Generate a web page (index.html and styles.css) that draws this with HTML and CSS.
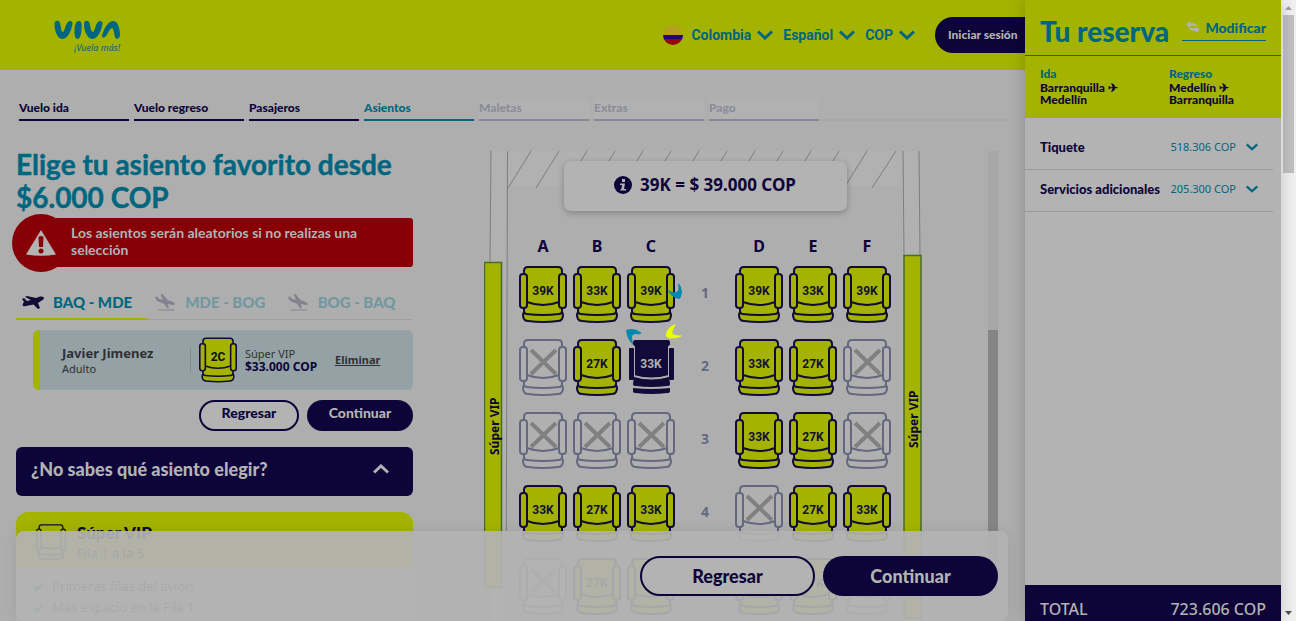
FILE: index.html
```html
<!DOCTYPE html>
<html lang="es">
<head>
<meta charset="utf-8">
<title>Viva - Elige tu asiento</title>
<link rel="stylesheet" href="styles.css">
</head>
<body>
<svg class="defs" aria-hidden="true">
  <symbol id="seat" viewBox="0 0 48 57">
    <path class="seat-fill" d="M5 48Q3 55 7 55Q24 58 41 55Q45 55 43 48V5Q43 1 39 1H9Q5 1 5 5Z"/>
    <path class="seat-line" d="M5 8V5Q5 1 9 1H39Q43 1 43 5V8M8 36Q24 42 40 36M5 41V45Q5 48 8 48Q24 50 40 48Q43 48 43 45V41M5 46Q3 49 5 53Q6 55 9 55Q24 57 39 55Q42 55 43 53Q45 49 43 46"/>
    <rect class="seat-arm" x="1" y="8" width="7" height="34" rx="3"/>
    <rect class="seat-arm" x="40" y="8" width="7" height="34" rx="3"/>
  </symbol>
  <symbol id="seat-picked" viewBox="0 0 48 57">
    <path class="seat-solid" d="M8 1H41Q43 1 43 4V6H42V36Q24 41 7 36V6H6V4Q6 1 8 1ZM7 38Q24 43 42 38V40Q43 42 43 45Q43 47 40 47Q24 49 9 47Q6 47 6 45ZM6 49Q24 51 43 49V52Q43 54 40 54Q24 56 9 54Q6 54 6 52Z"/>
    <rect class="seat-solid" x="2" y="9" width="5" height="32" rx="1"/>
    <rect class="seat-solid" x="42" y="9" width="5" height="32" rx="1"/>
    <path class="seat-gap" d="M7.500 7V37Q24 42 41.500 37V7M7 48Q24 50 42 48"/>
  </symbol>
  <symbol id="seat-taken" viewBox="0 0 48 57">
    <use href="#seat"/>
    <path class="seat-cross" d="M12 11L37 35M37 11L12 35"/>
  </symbol>
  <symbol id="chevron" viewBox="0 0 16 10"><path class="chevron-line" d="M1 1.500L8 8L15 1.500"/></symbol>
  <symbol id="plane-land" viewBox="0 0 20 18">
    <path d="M0 4L2 3.500L4.500 6L8 6.800L5.500 1.500L7.500 1L13 7.500Q19 8.500 20 11Q20 12 18 12L12.500 11L14 15L12.500 15.500L8.500 10.500L3 8.500Q1 7.500 0 4Z"/>
    <rect x="3" y="16.500" width="16" height="1"/>
  </symbol>
  <symbol id="check" viewBox="0 0 10 8"><path class="check-line" d="M1 4L4 7L9.500 1"/></symbol>
</svg>

<div class="window">
  <div class="main">
    <header class="topbar">
      <a class="logo" href="#" aria-label="Viva">
        <svg class="logo-mark" viewBox="0 0 66 20" aria-hidden="true">
          <path d="M0.500 4C0.500 0 5 0 6 3C7 7 7 12 9 12C11 11 11 5 14 2C16 0 19 1 18.500 4C17.500 10 14 19 8.500 19C3 19 0.500 10 0.500 4ZM20.500 11C20.500 5 22 1 25 1C27.500 1 28 4 27.500 9C27.500 14 26 19 23.500 19C21 19 20.500 15 20.500 11ZM30 4C30 0 34.500 0 35.500 3C36.500 7 37 12 39 12C41 11 41 5 44 2C46 0 49 1 48.500 4C47.500 10 44 19 38.500 19C33 19 30 10 30 4ZM48 16C49 10 54 1 59 1C64 1 66 9 66 15C66 19 62 20 61 17C60 13 59.500 8 58 8C55 9 54 14 52 16C50 18 48 18 48 16Z"/>
        </svg>
        <span class="logo-tag">¡Vuela más!</span>
      </a>
      <nav class="prefs">
        <button class="pref"><span class="flag"></span>Colombia <svg class="chev-lg"><use href="#chevron"/></svg></button>
        <button class="pref">Español <svg class="chev-lg"><use href="#chevron"/></svg></button>
        <button class="pref">COP <svg class="chev-lg"><use href="#chevron"/></svg></button>
        <button class="login">Iniciar sesión</button>
      </nav>
    </header>

    <nav class="steps">
      <a class="step done" href="#">Vuelo ida</a>
      <a class="step done" href="#">Vuelo regreso</a>
      <a class="step done" href="#">Pasajeros</a>
      <a class="step current" href="#">Asientos</a>
      <a class="step" href="#">Maletas</a>
      <a class="step" href="#">Extras</a>
      <a class="step" href="#">Pago</a>
    </nav>

    <div class="content">
      <section class="picker">
        <h1 class="title">Elige tu asiento favorito desde $6.000 COP</h1>
        <div class="alert">
          <span class="alert-badge"><svg class="alert-icon" viewBox="0 0 30 26" aria-hidden="true"><path class="tri" d="M15 0L30 24.500Q15 27 0 24.500Z"/><path class="bang" d="M12.500 7Q15 5 17.500 7L17 17H13Z"/><circle class="bang" cx="15" cy="21" r="2.500"/></svg></span>
          <p class="alert-text">Los asientos serán aleatorios si no realizas una selección</p>
        </div>
        <div class="legs">
          <button class="leg active"><svg class="leg-icon" viewBox="0 0 22 14" aria-hidden="true"><path d="M0 4L2 3L5 6L9 5L3 2L5 1L14 3L18 1.500Q22 1 22 3Q22 4.500 19 6L16 8L18 13L16 14L11.500 9.500L4 11Q1 12 0.500 10Q1 8 2 7Z"/></svg>BAQ - MDE</button>
          <button class="leg"><svg class="leg-icon land"><use href="#plane-land"/></svg>MDE - BOG</button>
          <button class="leg"><svg class="leg-icon land"><use href="#plane-land"/></svg>BOG - BAQ</button>
        </div>
        <article class="passenger">
          <div class="who"><strong class="name">Javier Jimenez</strong><span>Adulto</span></div>
          <div class="own-seat"><svg class="own-seat-icon"><use href="#seat"/></svg><span class="own-label">2C</span></div>
          <div class="fare"><span>Súper VIP</span><strong class="price">$33.000 COP</strong></div>
          <a class="remove" href="#">Eliminar</a>
        </article>
        <div class="actions">
          <button class="btn btn-line">Regresar</button>
          <button class="btn btn-solid">Continuar</button>
        </div>
        <button class="help">¿No sabes qué asiento elegir?<svg class="chev-up"><use href="#chevron"/></svg></button>
        <article class="zone">
          <header class="zone-head">
            <svg class="zone-seat"><use href="#seat"/></svg>
            <div class="zone-text"><h2 class="zone-title">Súper VIP</h2><p class="zone-rows">Fila 1 a la 5</p></div>
          </header>
          <ul class="perks">
            <li class="perk"><svg class="check"><use href="#check"/></svg>Primeras filas del avión</li>
            <li class="perk"><svg class="check"><use href="#check"/></svg>Más espacio en la Fila 1</li>
          </ul>
        </article>
      </section>

      <section class="map">
        <div class="cabin">
          <svg class="hull" viewBox="0 0 440 470" aria-hidden="true">
            <rect class="hull-panel" x="22" y="0" width="396" height="35"/>
            <path class="hull-panel" d="M6 0H22V470H6ZM418 0H435V470H418Z"/>
            <path class="hull-line" d="M47 0L24 37M75 0L52 37M103 0L80 37M131 0L108 37M159 0L136 37M187 0L164 37M215 0L192 37M243 0L220 37M271 0L248 37M299 0L276 37M327 0L304 37M355 0L332 37M383 0L360 37M412 0L388 37M7 0L6 112M23.500 0L22 470M419 0L420 105M435 0L436 105M6 436V470M420 468V470"/>
            <rect class="wing" x="0.500" y="111.500" width="17" height="325"/>
            <rect class="wing" x="420" y="104.500" width="17" height="363"/>
            <text class="wing-text" transform="translate(15 304) rotate(-90)">Súper VIP</text>
            <text class="wing-text" transform="translate(434 297) rotate(-90)">Súper VIP</text>
          </svg>
          <p class="tip"><svg class="info" viewBox="0 0 18 18" aria-hidden="true"><circle class="info-disc" cx="9" cy="9" r="9"/><path class="info-mark" d="M8 3H11V6H8ZM6 7.500H11L10 13H12V14.500H6.500V13H7.500L8 9H6Z"/></svg>39K = $ 39.000 COP</p>
          <div class="seats">
            <span class="col">A</span><span class="col">B</span><span class="col">C</span><span></span><span class="col">D</span><span class="col">E</span><span class="col">F</span>

            <button class="seat"><svg><use href="#seat"/></svg><b>39K</b></button>
            <button class="seat"><svg><use href="#seat"/></svg><b>33K</b></button>
            <button class="seat"><svg><use href="#seat"/></svg><b>39K</b></button>
            <span class="row">1</span>
            <button class="seat"><svg><use href="#seat"/></svg><b>39K</b></button>
            <button class="seat"><svg><use href="#seat"/></svg><b>33K</b></button>
            <button class="seat"><svg><use href="#seat"/></svg><b>39K</b></button>

            <button class="seat taken" aria-label="2A ocupado"><svg><use href="#seat-taken"/></svg></button>
            <button class="seat"><svg><use href="#seat"/></svg><b>27K</b></button>
            <button class="seat picked"><svg><use href="#seat-picked"/></svg><b>33K</b></button>
            <span class="row">2</span>
            <button class="seat"><svg><use href="#seat"/></svg><b>33K</b></button>
            <button class="seat"><svg><use href="#seat"/></svg><b>27K</b></button>
            <button class="seat taken" aria-label="2F ocupado"><svg><use href="#seat-taken"/></svg></button>

            <button class="seat taken" aria-label="3A ocupado"><svg><use href="#seat-taken"/></svg></button>
            <button class="seat taken" aria-label="3B ocupado"><svg><use href="#seat-taken"/></svg></button>
            <button class="seat taken" aria-label="3C ocupado"><svg><use href="#seat-taken"/></svg></button>
            <span class="row">3</span>
            <button class="seat"><svg><use href="#seat"/></svg><b>33K</b></button>
            <button class="seat"><svg><use href="#seat"/></svg><b>27K</b></button>
            <button class="seat taken" aria-label="3F ocupado"><svg><use href="#seat-taken"/></svg></button>

            <button class="seat"><svg><use href="#seat"/></svg><b>33K</b></button>
            <button class="seat"><svg><use href="#seat"/></svg><b>27K</b></button>
            <button class="seat"><svg><use href="#seat"/></svg><b>33K</b></button>
            <span class="row">4</span>
            <button class="seat taken" aria-label="4D ocupado"><svg><use href="#seat-taken"/></svg></button>
            <button class="seat"><svg><use href="#seat"/></svg><b>27K</b></button>
            <button class="seat"><svg><use href="#seat"/></svg><b>33K</b></button>

            <button class="seat taken" aria-label="5A ocupado"><svg><use href="#seat-taken"/></svg></button>
            <button class="seat"><svg><use href="#seat"/></svg><b>27K</b></button>
            <button class="seat"><svg><use href="#seat"/></svg></button>
            <span></span>
            <button class="seat"><svg><use href="#seat"/></svg></button>
            <button class="seat"><svg><use href="#seat"/></svg><b>27K</b></button>
            <button class="seat taken" aria-label="5F ocupado"><svg><use href="#seat-taken"/></svg></button>
          </div>
        </div>
        <div class="map-scroll"><div class="map-thumb"></div></div>
      </section>
    </div>

    <div class="footbar">
      <button class="btn-big btn-line">Regresar</button>
      <button class="btn-big btn-solid">Continuar</button>
    </div>
    <svg class="spinner" viewBox="624 282 60 64" aria-hidden="true">
      <path class="spin-blue" d="M667.500 290Q675 294 678 291Q679 288 678 283.500Q681 284 682 292Q681 299 679 299Q672 298 667.500 290ZM626 330Q634 327 641.500 333Q641 335 636 334Q632 334 632 337Q632 341 633.500 345Q627 340 626 330Z"/>
      <path class="spin-lime" d="M676 324Q671 332 673 334Q677 336 682 335.500Q681 338 669 338.500Q665 337 666 333Q669 326 676 324Z"/>
    </svg>
  </div>

  <aside class="booking">
    <header class="booking-head">
      <h2 class="booking-title">Tu reserva</h2>
      <a class="modify" href="#"><svg class="swap" viewBox="0 0 14 12" aria-hidden="true"><path d="M0 3.500L4.500 0V2Q9 2 12 5Q8 4.500 4.500 5V7ZM14 8.500L9.500 5.500V7Q5 7 2 6.500Q5 10 9.500 10V12Z"/></svg>Modificar</a>
    </header>
    <div class="route">
      <div class="trip"><span class="trip-kind">Ida</span>Barranquilla ✈<br>Medellín</div>
      <div class="trip"><span class="trip-kind">Regreso</span>Medellín ✈<br>Barranquilla</div>
    </div>
    <div class="lines">
      <button class="line"><span>Tiquete</span><span class="amount">518.306 COP</span><svg class="chev-sm"><use href="#chevron"/></svg></button>
      <button class="line"><span>Servicios adicionales</span><span class="amount">205.300 COP</span><svg class="chev-sm"><use href="#chevron"/></svg></button>
    </div>
    <footer class="total"><span>TOTAL</span><span>723.606 COP</span></footer>
  </aside>

  <div class="scrollbar" aria-hidden="true">
    <svg class="arrow" viewBox="0 0 15 15"><path class="arrow-off" d="M4 10L7.500 6L11 10Z"/></svg>
    <div class="thumb"></div>
    <svg class="arrow arrow-end" viewBox="0 0 15 15"><path class="arrow-on" d="M4 5L7.500 9L11 5Z"/></svg>
  </div>
</div>
</body>
</html>
```
FILE: styles.css
```css
:root {
  --lime: #a3b300;
  --teal: #00667f;
  --navy: #0d0439;
  --white: #b3b3b3;
  --page: #aeaeae;
  --rounded: Lato, "Noto Sans", sans-serif;
  --plain: "Noto Sans", "Open Sans", sans-serif;
}
* { box-sizing: border-box; }
body { margin: 0; background: var(--page); color: var(--navy); font-family: var(--rounded); }
h1, h2, p, ul { margin: 0; padding: 0; }
ul { list-style: none; }
a { color: inherit; text-decoration: none; }
button { font: inherit; color: inherit; background: none; border: 0; padding: 0; }
svg { display: block; flex: none; }
.defs { position: absolute; width: 0; height: 0; }

.window { display: flex; height: 100vh; overflow: hidden; }
.main { flex: 1; min-width: 0; position: relative; overflow: hidden; }

.seat-fill { fill: var(--seat-fill, var(--lime)); }
.seat-arm { fill: var(--seat-fill, var(--lime)); stroke: var(--seat-line, #120a38); stroke-width: 2; }
.seat-line { fill: none; stroke: var(--seat-line, #120a38); stroke-width: 2; }
.seat-solid { fill: #120a38; }
.seat-gap { fill: none; stroke: var(--page); stroke-width: 1; }
.seat-cross { stroke: #808080; stroke-width: 4; }
.chevron-line { fill: none; stroke: currentColor; stroke-width: 3; }
.check-line { fill: none; stroke: currentColor; stroke-width: 2; }

.topbar { display: flex; justify-content: space-between; height: 70px; padding-left: 54px; background: var(--lime); }
.logo { padding-top: 20px; color: var(--teal); }
.logo-mark { width: 66px; height: 20px; fill: var(--teal); }
.logo-tag { display: block; margin-top: 2px; text-align: right; font: italic 9px/12px var(--plain); }
.prefs { display: flex; flex: none; align-items: center; gap: 10px; color: var(--teal); font: 700 14px/20px Roboto, sans-serif; }
.pref { display: flex; align-items: center; gap: 6px; }
.flag { width: 20px; height: 20px; margin-right: 2px; border-radius: 50%; background: linear-gradient(#b3a11f 0 48%, #26007f 48% 70%, #98000c 70%); }
.chev-lg { width: 16px; height: 10px; }
.login { flex: none; width: 108px; height: 36px; margin: 0 -18px 0 10px; padding-left: 13px; border-radius: 18px; background: var(--navy); color: var(--white); text-align: left; white-space: nowrap; font: 900 12px/16px var(--rounded); }

.steps { display: flex; gap: 5px; margin: 29px 17px 0 19px; box-shadow: inset 0 -2px #a9a9a9; }
.step { width: 110px; height: 22px; border-bottom: 2px solid #858995; background: #b1b1b1; color: #8b8c9a; font-size: 12px; line-height: 18px; font-weight: 900; }
.step.done { border-color: var(--navy); color: var(--navy); background: none; }
.step.current { border-color: var(--teal); color: var(--teal); background: none; }

.content { display: flex; gap: 71px; padding: 27px 27px 0 16px; }
.picker { width: 397px; flex: none; }
.title { color: var(--teal); font-size: 28px; line-height: 33px; font-weight: 700; -webkit-text-stroke: .4px currentColor; }

.alert { display: flex; align-items: center; height: 49px; margin: 4px 0 0 25px; border-radius: 3px; background: #860006; color: var(--white); }
.alert-badge { display: flex; justify-content: center; align-items: center; flex: none; width: 58px; height: 58px; margin-left: -29px; border-radius: 50%; background: #860006; }
.alert-icon { width: 30px; height: 26px; }
.tri { fill: var(--white); }
.bang { fill: #860006; }
.alert-text { padding: 0 40px 4px 1px; font-size: 14px; line-height: 17px; font-weight: 700; }

.legs { display: flex; margin-top: 18px; box-shadow: inset 0 -1px #a0a0a0; }
.leg { display: flex; flex: 1; align-items: center; gap: 9px; height: 35px; padding-left: 6px; border-bottom: 2px solid transparent; color: #72989f; font-size: 15px; font-weight: 900; white-space: nowrap; }
.leg.active { border-color: var(--lime); color: var(--teal); }
.leg-icon { width: 22px; height: 14px; fill: #120a38; }
.leg-icon.land { height: 18px; fill: #85828f; }

.passenger { display: flex; align-items: center; height: 60px; margin: 10px 0 0 17px; padding-left: 22px; border-left: 7px solid var(--lime); border-radius: 6px; background: #94a2a5; color: #303034; font: 11px/16px var(--plain); }
.who { display: flex; flex-direction: column; width: 129px; padding-top: 2px; background: linear-gradient(#85898b, #85898b) right center / 1px 24px no-repeat; }
.name { font-size: 13px; }
.own-seat { display: grid; place-items: center; margin-left: 8px; }
.own-seat > * { grid-area: 1 / 1; }
.own-seat-icon { width: 38px; height: 46px; }
.own-label { color: #101010; font: 700 12px/16px Roboto, sans-serif; padding-bottom: 6px; }
.fare { display: flex; flex-direction: column; width: 90px; margin-left: 8px; line-height: 13px; }
.price { color: var(--navy); font-size: 12px; white-space: nowrap; }
.remove { font-weight: 700; text-decoration: underline; }

.actions { display: flex; justify-content: flex-end; gap: 8px; margin-top: 10px; }
.btn { width: 106px; height: 31px; padding-bottom: 5px; border-radius: 16px; font-size: 14px; line-height: 16px; font-weight: 900; }
.btn.btn-line { width: 100px; }
.btn-line { border: 2px solid var(--navy); background: var(--white); color: var(--navy); }
.btn-solid { background: var(--navy); color: var(--white); }
.help { display: flex; justify-content: space-between; align-items: center; width: 100%; height: 49px; margin-top: 16px; padding: 0 24px 5px 15px; border-radius: 6px; background: var(--navy); color: var(--white); font-size: 18px; font-weight: 900; }
.chev-up { width: 16px; height: 10px; transform: rotate(180deg); }

.zone { margin-top: 16px; border-radius: 12px; overflow: hidden; background: var(--white); }
.zone-head { display: flex; gap: 11px; height: 56px; padding: 12px 20px 0; background: var(--lime); }
.zone-seat { width: 30px; height: 36px; }
.zone-title { font-size: 17px; line-height: 18px; font-weight: 900; }
.zone-rows { font: 13px/22px var(--plain); }
.perks { padding: 8px 17px 60px; color: #303034; font: 13px/21px var(--plain); }
.perk { display: flex; align-items: center; gap: 9px; }
.check { width: 10px; height: 8px; color: var(--teal); }

.map { display: flex; flex: 1; justify-content: space-between; margin-top: 3px; }
.cabin { position: relative; display: flex; flex-direction: column; align-items: center; width: 442px; padding-top: 10px; }
.hull { position: absolute; inset: 0 auto auto 0; width: 440px; height: 470px; }
.hull-panel { fill: #b1b1b1; }
.hull-line { fill: none; stroke: #7e7e7e; stroke-width: 1; }
.wing { fill: var(--lime); stroke: #486b28; stroke-width: 1.5; }
.wing-text { font: 700 12px var(--plain); fill: var(--navy); }
.tip { position: relative; display: flex; align-items: center; justify-content: center; gap: 8px; width: 283px; height: 50px; padding-bottom: 2px; border-radius: 7px; background: var(--white); box-shadow: 0 2px 6px rgba(0, 0, 0, .25); font: 700 17px/24px var(--plain); }
.info { width: 18px; height: 18px; }
.info-disc { fill: var(--navy); }
.info-mark { fill: var(--white); }
.seats { position: relative; display: grid; grid-template-columns: repeat(7, 54px); grid-template-rows: 14px repeat(5, 57px); row-gap: 16px; margin-top: 25px; justify-items: center; }
.col { height: 14px; font: 700 16px/20px var(--plain); }
.row { align-self: center; padding-bottom: 4px; color: #626a80; font: 700 14px/20px var(--plain); }
.seat { display: grid; place-items: center; width: 48px; height: 57px; }
.seat > * { grid-area: 1 / 1; }
.seat svg { width: 48px; height: 57px; }
.seat b { padding-bottom: 8px; color: #101030; font: 700 12px/16px Roboto, sans-serif; }
.seat.picked b { color: var(--white); }
.seat.taken { --seat-fill: #b0b0b0; --seat-line: #666880; }
.map-scroll { width: 10px; height: 470px; padding-top: 179px; background: #a7a7a7; }
.map-thumb { height: 260px; background: #858585; }

.footbar { position: absolute; left: 16px; right: 17px; bottom: 0; display: flex; justify-content: flex-end; gap: 8px; padding: 25px 10px; border-radius: 8px; background: rgba(179, 179, 179, .93); box-shadow: 0 0 14px rgba(0, 0, 0, .08); }
.btn-big { width: 175px; height: 40px; border-radius: 20px; font-size: 18px; font-weight: 900; }
.spinner { position: absolute; left: 624px; top: 282px; width: 60px; height: 64px; }
.spin-blue { fill: #0089ae; }
.spin-lime { fill: #e8ff00; }

.booking { position: relative; display: flex; flex: none; flex-direction: column; width: 256px; background: var(--white); box-shadow: 0 0 16px rgba(0, 0, 0, .2); }
.booking-head { display: flex; align-items: center; justify-content: space-between; height: 56px; padding: 6px 15px 0; border-bottom: 1px solid var(--teal); background: var(--lime); color: var(--teal); }
.booking-title { font-size: 28px; line-height: 34px; font-weight: 900; white-space: nowrap; }
.modify { display: flex; align-items: center; justify-content: flex-end; gap: 5px; width: 84px; height: 27px; margin-bottom: 6px; border-bottom: 1px solid var(--teal); font-size: 14px; font-weight: 900; }
.swap { width: 14px; height: 12px; fill: var(--white); }
.route { display: grid; grid-template-columns: 129px 1fr; height: 62px; padding: 10px 0 0 15px; background: var(--lime); font-size: 12px; line-height: 12px; font-weight: 900; }
.trip-kind { display: block; margin-bottom: 1px; line-height: 15px; color: var(--teal); }
.lines { padding: 10px 8px 0 0; }
.line { display: flex; align-items: center; width: 100%; height: 42px; padding: 0 15px 4px; border-bottom: 1px solid #9b9b9b; font-size: 13px; font-weight: 900; white-space: nowrap; }
.amount { margin-left: auto; margin-right: 10px; color: var(--teal); font: 11px/16px var(--plain); }
.chev-sm { width: 12px; height: 8px; color: var(--teal); }
.total { display: flex; justify-content: space-between; height: 36px; margin-top: auto; padding: 12px 15px 0; background: var(--navy); color: var(--white); font: 500 16px/24px var(--plain); }

.scrollbar { display: flex; flex-direction: column; flex: none; width: 15px; background: #f1f1f1; }
.arrow { width: 15px; height: 15px; }
.arrow-end { margin-top: auto; }
.arrow-off { fill: #a3a3a3; }
.arrow-on { fill: #505050; }
.thumb { height: 158px; margin: 0 2px; background: #c1c1c1; }
```
